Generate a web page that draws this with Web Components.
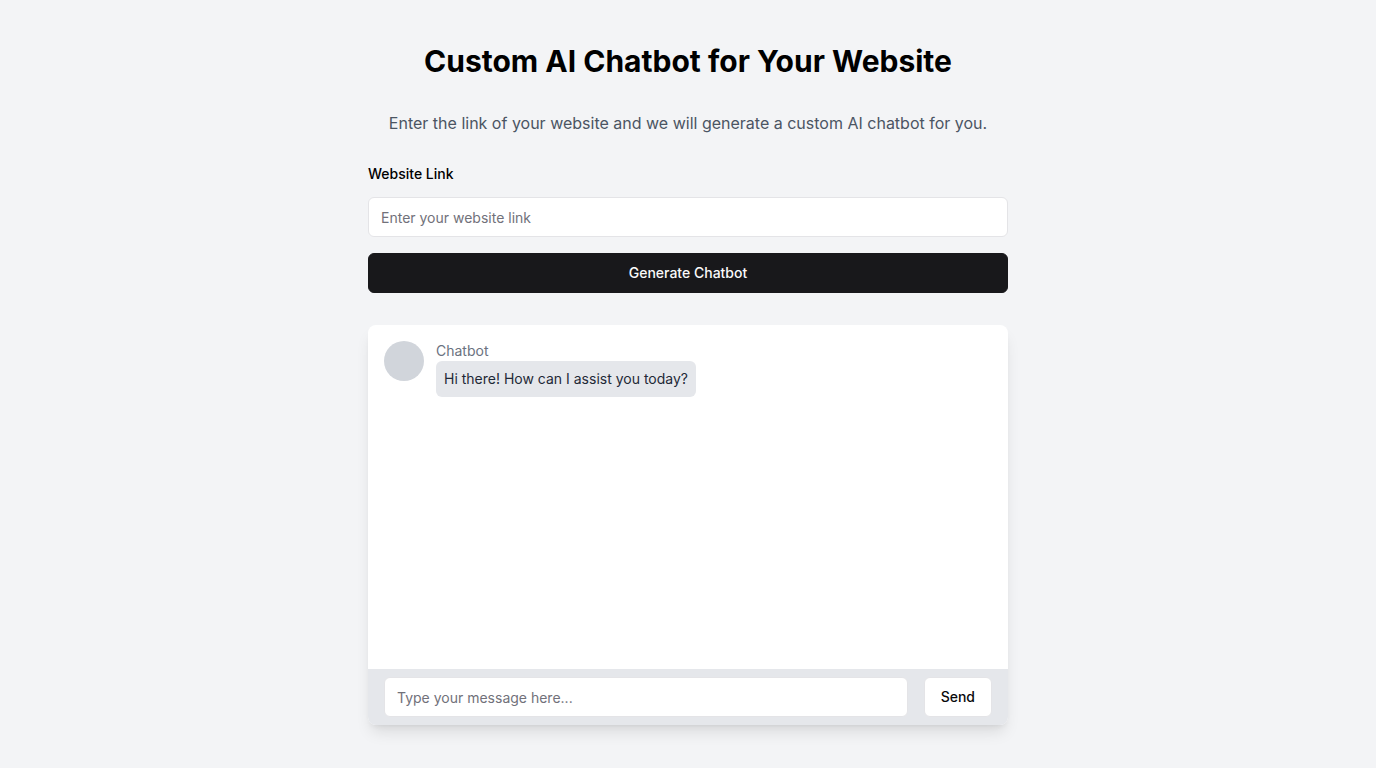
<!DOCTYPE html>
<html lang="en">
<head>
<meta charset="utf-8">
<meta name="viewport" content="width=device-width, initial-scale=1">
<title>Custom AI Chatbot for Your Website</title>
<style>
  body { margin: 0; font-family: Inter, sans-serif; font-size: 16px; line-height: 24px; color: #000; background: #f3f4f6; }
</style>
</head>
<body>
<chatbot-page>
  <link-form></link-form>
  <chat-panel>
    <chat-message author="Chatbot">Hi there! How can I assist you today?</chat-message>
  </chat-panel>
</chatbot-page>
<script>
  const base = `
    *, *::before, *::after { box-sizing: border-box; }
    h1, p, form { margin: 0; }
    input, button {
      font: inherit; font-size: 14px; line-height: 20px; height: 40px;
      border: 1px solid #e4e4e7; border-radius: 6px; background: #fff; color: #09090b;
    }
    input { min-width: 0; padding: 8px 12px; }
    input::placeholder { color: #71717a; opacity: 1; }
    button { padding: 8px 16px; font-weight: 500; cursor: pointer; }
    input:focus-visible, button:focus-visible { outline: 2px solid #09090b; outline-offset: 2px; }
  `;
  function define(name, markup, setup) {
    const template = document.createElement('template');
    template.innerHTML = markup;
    customElements.define(name, class extends HTMLElement {
      constructor() {
        super();
        this.attachShadow({ mode: 'open' }).append(template.content.cloneNode(true));
      }
      connectedCallback() { if (setup) setup(this, this.shadowRoot); }
    });
  }

  define('chatbot-page', `
    <style>${base}
      :host { display: flex; flex-direction: column; align-items: center; justify-content: center; min-height: 100vh; }
      main { width: 100%; max-width: 672px; padding: 16px; }
      header { display: flex; flex-direction: column; gap: 32px; margin-bottom: 28px; text-align: center; }
      h1 { font-size: 30px; line-height: 36px; font-weight: 700; }
      p { color: #4b5563; }
      .content { display: flex; flex-direction: column; gap: 32px; }
    </style>
    <main>
      <header>
        <h1>Custom AI Chatbot for Your Website</h1>
        <p>Enter the link of your website and we will generate a custom AI chatbot for you.</p>
      </header>
      <div class="content"><slot></slot></div>
    </main>`);

  define('link-form', `
    <style>${base}
      :host { display: block; }
      form { display: flex; flex-direction: column; gap: 16px; }
      .field { display: flex; flex-direction: column; gap: 12px; }
      label { font-size: 14px; line-height: 22px; font-weight: 500; }
      button { background: #18181b; border-color: #18181b; color: #fafafa; }
    </style>
    <form>
      <div class="field">
        <label for="link">Website Link</label>
        <input id="link" type="text" placeholder="Enter your website link">
      </div>
      <button type="submit">Generate Chatbot</button>
    </form>`, (host, root) => {
      root.querySelector('form').onsubmit = e => e.preventDefault();
    });

  define('chat-panel', `
    <style>${base}
      :host { display: flex; flex-direction: column; min-height: 400px; overflow: hidden; background: #fff; border-radius: 8px;
        box-shadow: 0 10px 15px -3px rgb(0 0 0 / .1), 0 4px 6px -4px rgb(0 0 0 / .1); }
      .log { flex: 1; padding: 16px; }
      form { display: flex; gap: 16px; padding: 8px 16px; background: #e5e7eb; }
      input { flex: 1; }
    </style>
    <div class="log"><slot></slot></div>
    <form>
      <input type="text" aria-label="Message" placeholder="Type your message here...">
      <button type="submit">Send</button>
    </form>`, (host, root) => {
      root.querySelector('form').onsubmit = e => e.preventDefault();
    });

  define('chat-message', `
    <style>${base}
      :host { display: flex; align-items: flex-start; gap: 12px; font-size: 14px; line-height: 20px; }
      .avatar { flex: none; width: 40px; height: 40px; border-radius: 50%; background: #d1d5db; }
      .author { color: #6b7280; }
      .bubble { padding: 8px; border-radius: 6px; background: #e5e7eb; color: #1f2937; }
    </style>
    <div class="avatar"></div>
    <div>
      <div class="author"></div>
      <div class="bubble"><slot></slot></div>
    </div>`, (host, root) => {
      root.querySelector('.author').textContent = host.getAttribute('author');
    });
</script>
</body>
</html>
